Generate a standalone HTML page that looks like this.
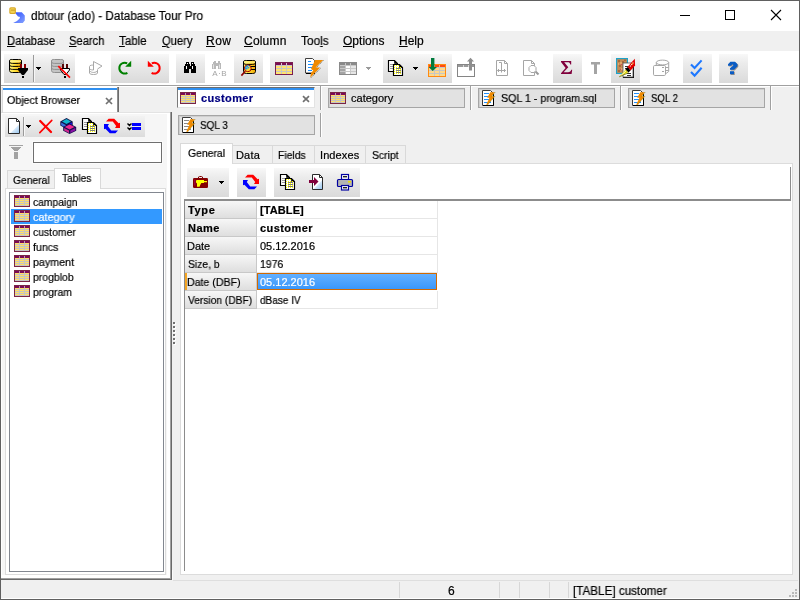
<!DOCTYPE html>
<html>
<head>
<meta charset="utf-8">
<title>dbtour (ado) - Database Tour Pro</title>
<style>
*{box-sizing:border-box;margin:0;padding:0}
html,body{width:800px;height:600px;overflow:hidden;background:#f0f0f0}
body{font-family:"Liberation Sans",sans-serif;font-size:11px;color:#000;position:relative}
.abs,.t,.tb,.ic{position:absolute}
.t{white-space:nowrap;line-height:1;will-change:transform;-webkit-text-stroke:0.2px currentColor}
/* window frame */
#frame{position:absolute;left:0;top:0;width:800px;height:600px;border:1px solid #606060;pointer-events:none;z-index:50}
#titlebar{position:absolute;left:1px;top:1px;width:798px;height:30px;background:#fff}
#menubar{position:absolute;left:1px;top:31px;width:798px;height:20px;background:#f0f0f0}
#menubar .t{font-size:12px;top:4px}
#menubar u{text-decoration:underline;text-decoration-thickness:1px;text-underline-offset:1px}
#toolbar{position:absolute;left:1px;top:51px;width:798px;height:34px;background:#fff}
.tb{top:54px;height:29px;width:29px;background:linear-gradient(#f8f8f8,#ececec 30%,#dadada)}
.ic{overflow:visible}
/* main tabs */
.mtab{position:absolute;height:20px;background:#e2e2e2;border:1px solid #a5a5a5;box-shadow:inset 1px 1px 0 #cfcfcf}
.mtab .t{font-size:11px;top:4px}
.vsep{position:absolute;width:2px;border-left:1px solid #a0a0a0;border-right:1px solid #fff}
/* grid */
.gh{position:absolute;left:185px;width:72px;height:18px;background:linear-gradient(#f7f7f7,#dedede);border-right:1px solid #c8c8c8;border-bottom:1px solid #c8c8c8}
.gv{position:absolute;left:257px;width:181px;height:18px;background:#fff;border-right:1px solid #e6e6e6;border-bottom:1px solid #e6e6e6}
.gh .t,.gv .t{top:4px;left:3px;font-size:11px}
.b{font-weight:bold}
/* list */
.li{position:absolute;left:11px;width:151px;height:15px}
.li .t{left:22px;top:3px;font-size:11px}
</style>
</head>
<body>
<div id="titlebar">
  <div class="t" id="ttl" style="left:29.9px;top:9px;font-size:12px;transform:scaleX(0.978);transform-origin:0 0">dbtour (ado) - Database Tour Pro</div>
</div>
<div id="menubar">
  <div class="t" style="left:6.2px;transform:scaleX(0.936);transform-origin:0 0"><u>D</u>atabase</div>
  <div class="t" style="left:68px;transform:scaleX(0.932);transform-origin:0 0"><u>S</u>earch</div>
  <div class="t" style="left:117.8px;transform:scaleX(0.964);transform-origin:0 0"><u>T</u>able</div>
  <div class="t" style="left:160.7px;transform:scaleX(0.933);transform-origin:0 0"><u>Q</u>uery</div>
  <div class="t" style="left:204.6px;letter-spacing:0.5px"><u>R</u>ow</div>
  <div class="t" style="left:243.4px;letter-spacing:0.2px"><u>C</u>olumn</div>
  <div class="t" style="left:300.4px;transform:scaleX(0.986);transform-origin:0 0">Too<u>l</u>s</div>
  <div class="t" style="left:342.4px;letter-spacing:0.02px"><u>O</u>ptions</div>
  <div class="t" style="left:397.5px;letter-spacing:0px"><u>H</u>elp</div>
</div>
<div id="toolbar"></div>
<div class="abs" style="left:1px;top:85px;width:798px;height:1px;background:#a0a0a0"></div>
<div class="abs" style="left:1px;top:86px;width:798px;height:1px;background:#fff"></div>

<!-- TOOLBAR-BUTTONS -->
<div class="tb" style="left:4px;width:71px"></div>
<div class="tb" style="left:111px;width:58px"></div>
<div class="tb" style="left:176px;width:29px"></div>
<div class="tb" style="left:234px;width:29px"></div>
<div class="tb" style="left:270px;width:58px"></div>
<div class="tb" style="left:383px;width:69px"></div>
<div class="tb" style="left:553px;width:29px"></div>
<div class="tb" style="left:611px;width:29px"></div>
<div class="tb" style="left:683px;width:29px"></div>
<div class="tb" style="left:719px;width:29px"></div>
<div class="abs" style="left:33px;top:55px;width:1px;height:27px;background:#9a9a9a"></div>
<div class="abs" style="left:34px;top:55px;width:1px;height:27px;background:#f6f6f6"></div>
<!-- TOOLBAR-ICONS -->

<!-- OBJECT-BROWSER -->
<!-- OB tab -->
<div class="abs" style="left:2px;top:87px;width:117px;height:26px;background:#fff;border-left:1px solid #d9d9d9;border-right:1px solid #6c6c6c;box-shadow:inset -1px 0 0 #8e8e8e"></div>
<div class="abs" style="left:3px;top:88px;width:114px;height:2px;background:#2f8ff0"></div>
<div class="t" id="obt" style="left:6.8px;top:95px;font-size:11px;transform:scaleX(0.971);transform-origin:0 0">Object Browser</div>
<svg class="ic" style="left:104.5px;top:96.5px" width="8" height="8" viewBox="0 0 8 8"><path d="M1 1L7 7M7 1L1 7" stroke="#707070" stroke-width="1.7" fill="none"/></svg>
<!-- OB panel -->
<div class="abs" style="left:1px;top:112px;width:171px;height:468px;background:#a0a0a0"></div><div class="abs" style="left:1px;top:112px;width:171px;height:468px;border-right:1px solid #696969;border-bottom:1px solid #696969"></div><div class="abs" style="left:1px;top:112px;width:169px;height:466px;background:#f6f6f6;border-top:1px solid #e3e3e3"></div><div class="abs" style="left:172px;top:570px;width:1px;height:10px;background:#fbfbfb"></div>
<div class="abs" style="left:1px;top:113px;width:169px;height:465px;border-left:1px solid #fff;border-top:1px solid #fff;border-right:3px solid #fff;border-bottom:3px solid #fff"></div>
<div class="abs" style="left:2px;top:87px;width:1px;height:26px;background:#d9d9d9"></div>
<!-- OB toolbar -->
<div class="abs" style="left:5px;top:116px;width:140px;height:21px;background:linear-gradient(#f3f3f3,#dcdcdc)"></div>
<div class="abs" style="left:23px;top:117px;width:1px;height:19px;background:#9a9a9a"></div>
<div class="abs" style="left:24px;top:117px;width:1px;height:19px;background:#f8f8f8"></div>
<!-- OB-ICONS -->
<!-- filter input -->
<div class="abs" style="left:33px;top:142px;width:129px;height:21px;background:#fff;border:1px solid #6f6f6f;box-shadow:0 0 0 1px #fbfbfb"></div>
<!-- OB inner tabs -->
<div class="abs" style="left:7px;top:170px;width:48px;height:18px;background:#f0f0f0;border:1px solid #d9d9d9;border-bottom:none"></div>
<div class="t" style="left:12.8px;top:175px;font-size:11px;transform:scaleX(0.936);transform-origin:0 0">General</div>
<div class="abs" style="left:5px;top:188px;width:161px;height:387px;background:#fff;border:1px solid #dcdcdc"></div>
<div class="abs" style="left:54px;top:168px;width:47px;height:21px;background:#fff;border:1px solid #d9d9d9;border-bottom:none"></div>
<div class="t" style="left:62.2px;top:173px;font-size:11px;transform:scaleX(0.922);transform-origin:0 0">Tables</div>
<!-- list -->
<div class="abs" style="left:9px;top:192px;width:155px;height:380px;background:#fff;border:1px solid #828790"></div>
<div class="li" style="top:209px;background:#3399ff"></div>
<!-- OB-LIST -->
<div class="li" style="top:194px"><div class="t" style="transform:scaleX(0.936);transform-origin:0 0">campaign</div></div>
<div class="li" style="top:209px"><div class="t" style="transform:scaleX(0.986);transform-origin:0 0;color:#fff">category</div></div>
<div class="li" style="top:224px"><div class="t" style="transform:scaleX(0.947);transform-origin:0 0">customer</div></div>
<div class="li" style="top:239px"><div class="t" style="transform:scaleX(0.969);transform-origin:0 0">funcs</div></div>
<div class="li" style="top:254px"><div class="t" style="transform:scaleX(0.971);transform-origin:0 0">payment</div></div>
<div class="li" style="top:269px"><div class="t" style="transform:scaleX(0.949);transform-origin:0 0">progblob</div></div>
<div class="li" style="top:284px"><div class="t" style="transform:scaleX(0.951);transform-origin:0 0">program</div></div>



<!-- MAIN-PANEL -->
<!-- active tab: customer -->
<div class="abs" style="left:177px;top:87px;width:138px;height:21px;background:#fff;border-left:1px solid #7a7a7a;border-top:1px solid #6c6c6c;border-right:1px solid #e3e3e3;border-bottom:1px solid #e3e3e3"></div>
<div class="abs" style="left:178px;top:88px;width:136px;height:2px;background:#2f8ff0"></div>
<div class="t b" id="cust" style="left:201px;top:93px;font-size:11px;color:#000080;letter-spacing:0.37px">customer</div>
<svg class="ic" style="left:301.6px;top:94.6px" width="8" height="8" viewBox="0 0 8 8"><path d="M1 1.2L7 6.8M7 1.2L1 6.8" stroke="#707070" stroke-width="1.7" fill="none"/></svg>
<!-- other tabs -->
<div class="mtab" style="left:328px;top:88px;width:137px"><div class="t" style="left:21.7px;letter-spacing:0.01px">category</div></div>
<div class="mtab" style="left:478px;top:88px;width:137px"><div class="t" style="left:21.5px;transform:scaleX(0.970);transform-origin:0 0">SQL 1 - program.sql</div></div>
<div class="mtab" style="left:628px;top:88px;width:137px"><div class="t" style="left:21.9px;transform:scaleX(0.874);transform-origin:0 0">SQL 2</div></div>
<div class="mtab" style="left:178px;top:115px;width:137px"><div class="t" style="left:21.4px;transform:scaleX(0.903);transform-origin:0 0">SQL 3</div></div>
<div class="vsep" style="left:320px;top:86px;height:24px"></div>
<div class="vsep" style="left:470px;top:86px;height:24px"></div>
<div class="vsep" style="left:620px;top:86px;height:24px"></div>
<div class="vsep" style="left:770px;top:86px;height:24px"></div>
<div class="vsep" style="left:320px;top:113px;height:24px"></div>
<!-- MAIN-TAB-ICONS -->
<!-- page control -->
<div class="abs" style="left:180px;top:163px;width:613px;height:412px;background:#fff;border:1px solid #dcdcdc"></div>
<div class="abs" style="left:232px;top:145px;width:41px;height:18px;border:1px solid #d9d9d9;border-bottom:none;border-left:none"></div>
<div class="abs" style="left:272px;top:145px;width:43px;height:18px;border:1px solid #d9d9d9;border-bottom:none;border-left:none"></div>
<div class="abs" style="left:314px;top:145px;width:52px;height:18px;border:1px solid #d9d9d9;border-bottom:none;border-left:none"></div>
<div class="abs" style="left:365px;top:145px;width:41px;height:18px;border:1px solid #d9d9d9;border-bottom:none;border-left:none"></div>
<div class="abs" style="left:180px;top:143px;width:53px;height:21px;background:#fff;border:1px solid #d9d9d9;border-bottom:none"></div>
<div class="t" style="left:187.6px;top:148px;transform:scaleX(0.946);transform-origin:0 0">General</div>
<div class="t" style="left:235.5px;top:150px;letter-spacing:0.17px">Data</div>
<div class="t" style="left:277.5px;top:150px;transform:scaleX(0.946);transform-origin:0 0">Fields</div>
<div class="t" style="left:320px;top:150px;letter-spacing:0.1px">Indexes</div>
<div class="t" style="left:371.5px;top:150px;transform:scaleX(0.946);transform-origin:0 0">Script</div>
<!-- page toolbar -->
<div class="tb" style="left:187px;top:168px;width:42px;height:29px"></div>
<div class="tb" style="left:237px;top:168px;width:29px;height:29px"></div>
<div class="tb" style="left:274px;top:168px;width:86px;height:29px"></div>
<div class="abs" style="left:790px;top:167px;width:1px;height:33px;background:#8c8c8c"></div>
<div class="abs" style="left:184px;top:199px;width:607px;height:2px;background:#8c8c8c"></div>
<div class="abs" style="left:184px;top:199px;width:1px;height:372px;background:#8c8c8c"></div>
<!-- PAGE-ICONS -->
<!-- grid -->
<div class="gh" style="top:201px"><div class="t b" style="letter-spacing:0.67px">Type</div></div><div class="gv" style="top:201px"><div class="t b" style="letter-spacing:0.1px">[TABLE]</div></div>
<div class="gh" style="top:219px"><div class="t b" style="letter-spacing:0.47px">Name</div></div><div class="gv" style="top:219px"><div class="t b" style="letter-spacing:0.43px">customer</div></div>
<div class="gh" style="top:237px"><div class="t" style="left:2px">Date</div></div><div class="gv" style="top:237px"><div class="t">05.12.2016</div></div>
<div class="gh" style="top:255px"><div class="t" style="transform:scaleX(0.939);transform-origin:0 0">Size, b</div></div><div class="gv" style="top:255px"><div class="t" style="left:2.6px;transform:scaleX(0.957);transform-origin:0 0">1976</div></div>
<div class="gh" style="top:273px"><div class="t" style="left:2px;transform:scaleX(0.963);transform-origin:0 0">Date (DBF)</div></div><div class="gv" style="top:273px;background:linear-gradient(#63b0ff,#3a97fb);border:1px solid #d26900;height:17px;width:180px"><div class="t" style="color:#fff;left:2px;top:3px">05.12.2016</div></div>
<div class="gh" style="top:291px"><div class="t" style="transform:scaleX(0.928);transform-origin:0 0">Version (DBF)</div></div><div class="gv" style="top:291px"><div class="t" style="transform:scaleX(0.911);transform-origin:0 0">dBase IV</div></div>
<div class="abs" style="left:185px;top:273px;width:2px;height:17px;background:#f5a623"></div>
<!-- splitter grip -->
<div class="abs" style="left:174px;top:323px;width:2px;height:2px;background:#fff;box-shadow:0 4px 0 #fff,0 8px 0 #fff,0 12px 0 #fff,0 16px 0 #fff,0 20px 0 #fff"></div>
<div class="abs" style="left:173px;top:322px;width:2px;height:2px;background:#707070;box-shadow:0 4px 0 #707070,0 8px 0 #707070,0 12px 0 #707070,0 16px 0 #707070,0 20px 0 #707070"></div>


<!-- STATUS-BAR -->
<div class="abs" style="left:173px;top:580px;width:625px;height:1px;background:#dedede"></div>
<div class="abs" style="left:1px;top:581px;width:798px;height:17px;background:#f0f0f0"></div>
<div class="abs" style="left:1px;top:598px;width:798px;height:1px;background:#fff"></div>
<div class="abs" style="left:399px;top:582px;width:1px;height:16px;background:#d7d7d7"></div>
<div class="abs" style="left:499px;top:582px;width:1px;height:16px;background:#d7d7d7"></div>
<div class="abs" style="left:519px;top:582px;width:1px;height:16px;background:#d7d7d7"></div>
<div class="abs" style="left:549px;top:582px;width:1px;height:16px;background:#d7d7d7"></div>
<div class="abs" style="left:568px;top:582px;width:1px;height:16px;background:#d7d7d7"></div>
<div class="abs" style="left:795px;top:589px;width:2px;height:2px;background:#b9b9b9;box-shadow:0 3px 0 #b9b9b9,0 6px 0 #b9b9b9,-3px 3px 0 #b9b9b9,-3px 6px 0 #b9b9b9,-6px 6px 0 #b9b9b9"></div>
<div class="t" style="left:447.5px;top:585px;font-size:12px">6</div>
<div class="t" id="stt" style="left:572.5px;top:585px;font-size:12px;transform:scaleX(0.972);transform-origin:0 0">[TABLE] customer</div>


<!-- ICONS-BEGIN -->
<svg class="abs" style="left:0;top:0;z-index:10" width="800" height="600" viewBox="0 0 800 600">
<defs>
<linearGradient id="gy" x1="0" x2="1" y1="0" y2="0"><stop offset="0" stop-color="#fff27a"/><stop offset=".45" stop-color="#ffe23a"/><stop offset="1" stop-color="#f0a000"/></linearGradient>
<linearGradient id="gb2" x1="0" x2="1" y1="0" y2="1"><stop offset=".4" stop-color="#e4f1fc"/><stop offset="1" stop-color="#9cc8f0"/></linearGradient><linearGradient id="gb" x1="0" x2="1" y1="0" y2="1"><stop offset=".45" stop-color="#fff"/><stop offset=".5" stop-color="#cfe6fb"/><stop offset="1" stop-color="#9fcaf2"/></linearGradient>
<!-- table 16x12 -->
<g id="tbl" shape-rendering="crispEdges">
<rect x="0" y="0" width="16" height="12" fill="#7a2545"/>
<rect x="1" y="1" width="14" height="2" fill="#7a0a57"/>
<rect x="1" y="3" width="14" height="8" fill="#c4c4c4"/>
<g fill="#ffde66"><rect x="1" y="3" width="4" height="1"/><rect x="6" y="3" width="4" height="1"/><rect x="11" y="3" width="4" height="1"/>
<rect x="1" y="5" width="4" height="1"/><rect x="6" y="5" width="4" height="1"/><rect x="11" y="5" width="4" height="1"/>
<rect x="1" y="7" width="4" height="1"/><rect x="6" y="7" width="4" height="1"/><rect x="11" y="7" width="4" height="1"/>
<rect x="1" y="9" width="4" height="1"/><rect x="6" y="9" width="4" height="1"/><rect x="11" y="9" width="4" height="1"/></g>
<rect x="5" y="1" width="1" height="2" fill="#b9a0b0"/><rect x="10" y="1" width="1" height="2" fill="#b9a0b0"/>
</g>
<g id="tbl18" shape-rendering="crispEdges">
<rect x="0" y="0" width="18" height="13" fill="#7a1d50"/>
<rect x="1" y="1" width="16" height="2" fill="#7a0c52"/>
<rect x="1" y="3" width="16" height="9" fill="#c6c6c6"/>
<g fill="#ffe36e"><rect x="1" y="4" width="5" height="2"/><rect x="7" y="4" width="4" height="2"/><rect x="12" y="4" width="5" height="2"/>
<rect x="1" y="7" width="5" height="2"/><rect x="7" y="7" width="4" height="2"/><rect x="12" y="7" width="5" height="2"/>
<rect x="1" y="10" width="5" height="2"/><rect x="7" y="10" width="4" height="2"/><rect x="12" y="10" width="5" height="2"/></g>
<rect x="6" y="1" width="1" height="2" fill="#d8c8d2"/><rect x="11" y="1" width="1" height="2" fill="#d8c8d2"/>
</g>
<!-- sql doc 13x16 origin at doc top-left -->
<g id="sql">
<path d="M0.5 0.5H8.5L11.5 3.5V15.5H0.5Z" fill="#fff" stroke="#3c3c3c"/>
<path d="M1 15.5H11.5V4" fill="none" stroke="#000"/>
<path d="M2 3.5H7M2 6.5H8M2 9.5H8M2 12.5H9" stroke="#1e90ff" stroke-width="1"/>
<path d="M8.3 2.2H13L9.8 6.3H12.8L5.7 14.8H4.2L7.5 7.7H5.2Z" fill="#f08a00"/>
<path d="M13 2.4L9.9 6.4H12.8L5.9 14.6" fill="none" stroke="#5a6a00" stroke-width=".6" stroke-dasharray="1 1"/>
</g>
<g id="sqlg">
<path d="M0.5 0.5H8.5L11.5 3.5V15.5H0.5Z" fill="#fff" stroke="#3c3c3c"/>
<path d="M1 15.5H11.5V4" fill="none" stroke="#000"/>
<path d="M2 3.5H7M2 6.5H8M2 9.5H8M2 12.5H9" stroke="#8a8a8a" stroke-width="1"/>
<path d="M8.3 2.2H13L9.8 6.3H12.8L5.7 14.8H4.2L7.5 7.7H5.2Z" fill="#f08a00"/>
<path d="M13 2.4L9.9 6.4H12.8L5.9 14.6" fill="none" stroke="#5a6a00" stroke-width=".6" stroke-dasharray="1 1"/>
</g>
<!-- copy icon, origin at back doc top-left (16x16) -->
<g id="copy">
<path d="M0.5 0.5H6.5L9.5 3.5V11.5H0.5Z" fill="#fff" stroke="#000" stroke-width="1.15"/>
<path d="M6.5 0.5V3.5H9.5Z" fill="#000" stroke="#000" stroke-width=".6"/>
<path d="M2 4.5H5M2 6.5H5M2 8.5H5" stroke="#9c9c9c"/>
<path d="M5.5 4.5H11.5L14.5 7.5V15.5H5.5Z" fill="#fff" stroke="#000" stroke-width="1.15"/>
<path d="M11.5 4.5V7.5H14.5Z" fill="#000" stroke="#000" stroke-width=".6"/>
<g fill="#ffff00" shape-rendering="crispEdges"><rect x="6" y="5" width="1" height="1"/><rect x="8" y="5" width="1" height="1"/><rect x="10" y="5" width="1" height="1"/><rect x="6" y="7" width="1" height="1"/><rect x="8" y="7" width="1" height="1"/><rect x="10" y="7" width="1" height="1"/><rect x="12" y="7" width="1" height="1"/><rect x="6" y="9" width="1" height="1"/><rect x="8" y="9" width="1" height="1"/><rect x="10" y="9" width="1" height="1"/><rect x="12" y="9" width="1" height="1"/><rect x="6" y="11" width="1" height="1"/><rect x="8" y="11" width="1" height="1"/><rect x="10" y="11" width="1" height="1"/><rect x="12" y="11" width="1" height="1"/><rect x="6" y="13" width="1" height="1"/><rect x="8" y="13" width="1" height="1"/><rect x="10" y="13" width="1" height="1"/><rect x="12" y="13" width="1" height="1"/></g>
<path d="M7.5 8.5H13M7.5 10.5H13M7.5 12.5H13" stroke="#7e7e7e" shape-rendering="crispEdges"/>
</g>
<!-- refresh 16x14 -->
<g id="refr">
<path d="M2 2.4L4.6 -0.2H10.2L14.6 4.2L16 3.8V9H11L12.2 7L8.8 2.4Z" fill="#ff0000"/>
<path d="M14 11.6L11.4 14.2H5.8L1.4 9.8L0 10.2V5H5L3.8 7L7.2 11.6Z" fill="#0000ff"/>
</g>
<g id="dd" shape-rendering="crispEdges"><rect x="0" y="0" width="5" height="1"/><rect x="1" y="1" width="3" height="1"/><rect x="2" y="2" width="1" height="1"/></g>
</defs>
<!-- ===== main toolbar icons ===== -->
<!-- db connect -->
<g>
<path d="M9.5 61C9.5 59 12 59.5 12.5 59.5H18.5C19 59.5 21.5 59 21.5 61V70.5C21.5 72.5 19 72.5 18.5 72.5H12.5C12 72.5 9.5 72.5 9.5 70.5Z" fill="url(#gy)" stroke="#000"/>
<path d="M10 60.3H21V62.3H10Z" fill="#fff48a" opacity=".85"/>
<path d="M9.5 61.5C9.5 63.4 12 63.4 12.5 63.4H18.5C19 63.4 21.5 63.4 21.5 61.5M9.5 64.5C9.5 66.4 12 66.4 12.5 66.4H18.5C19 66.4 21.5 66.4 21.5 64.5M9.5 67.5C9.5 69.4 12 69.4 12.5 69.4H18.5C19 69.4 21.5 69.4 21.5 67.5" fill="none" stroke="#000"/>
<rect x="20" y="64" width="2" height="4" fill="#8a0000"/><rect x="24" y="64" width="2" height="4" fill="#8a0000"/>
<path d="M18 68H28V70L24 75H22L18 70Z" fill="#000"/><rect x="22" y="76" width="2" height="2" fill="#000"/>
</g>
<use href="#dd" x="36" y="67"/>
<!-- db disconnect -->
<g>
<path d="M51.5 61C51.5 59 54 59.5 54.5 59.5H60.5C61 59.5 63.5 59 63.5 61V70.5C63.5 72.5 61 72.5 60.5 72.5H54.5C54 72.5 51.5 72.5 51.5 70.5Z" fill="#c4c4c4" stroke="#8e8e8e"/>
<path d="M51.5 61.5C51.5 63.4 54 63.4 54.5 63.4H60.5C61 63.4 63.5 63.4 63.5 61.5M51.5 64.5C51.5 66.4 54 66.4 54.5 66.4H60.5C61 66.4 63.5 66.4 63.5 64.5M51.5 67.5C51.5 69.4 54 69.4 54.5 69.4H60.5C61 69.4 63.5 69.4 63.5 67.5" fill="none" stroke="#8e8e8e"/>
<rect x="62" y="64" width="2" height="4" fill="#5a0808"/><rect x="66" y="64" width="2" height="4" fill="#5a0808"/>
<path d="M60.5 68.5H69.5V70L66 74.5H64L60.5 70Z" fill="#fff" stroke="#000"/><rect x="64" y="76" width="2" height="2" fill="#000"/>
<path d="M58.3 66.2L70 77.6" stroke="#ff0000" stroke-width="1.7"/>
</g>
<!-- disabled run -->
<g fill="none" stroke="#a8a8a8">
<path d="M93.5 70V61.5L102 66L97.5 69"/>
<path d="M89.5 66.5C89.5 65 93 65 93.5 65.2M89.5 66.5V73C89.5 75 97.5 75 97.5 73V69.5M89.5 68.5C90 70 93 70 93.5 70M90 71C91 73 96.5 73 97.5 70.5"/>
</g>
<!-- redo green -->
<g>
<path d="M127.2 63.3A5.4 5.4 0 1 0 127.4 72.8" fill="none" stroke="#008000" stroke-width="2"/>
<path d="M125.2 66.7H131.2V60.7Z" fill="#008000"/>
</g>
<!-- undo red -->
<g>
<path d="M151.8 63.3A5.4 5.4 0 1 1 151.6 72.8" fill="none" stroke="#ff0000" stroke-width="2"/>
<path d="M153.8 66.7H147.8V60.7Z" fill="#ff0000"/>
</g>
<!-- binoculars -->
<g fill="#000">
<path d="M186 62H189V64H190V66H191V64H191V62H194V64H195V66H196V73H191V69H189V73H184V66H185V64H186Z"/>
<rect x="187" y="63" width="1" height="1" fill="#fff"/><rect x="192" y="63" width="1" height="1" fill="#fff"/>
<rect x="186" y="66" width="1" height="3" fill="#fff"/><rect x="192" y="66" width="1" height="3" fill="#fff"/>
</g>
<!-- binoculars disabled A-B -->
<g fill="#b8b8b8">
<path d="M214 61H216V63H218V61H220V63H221V69H218V66H216V69H212V64H213V62H214Z"/><path d="M213.5 64.5V68.5M219.5 64.5V68.5" stroke="#e4e4e4" stroke-width="1"/>
</g>
<text x="212.3" y="75.6" font-family="Liberation Sans" font-size="8" fill="#a4a4a4" letter-spacing=".5">A·B</text>
<!-- db search -->
<g>
<path d="M243.5 62C243.5 60 246 60.5 246.5 60.5H252.5C253 60.5 255.5 60 255.5 62V71.5C255.5 73.5 253 73.5 252.5 73.5H246.5C246 73.5 243.5 73.5 243.5 71.5Z" fill="url(#gy)" stroke="#000"/>
<path d="M244 61.3H255V63.3H244Z" fill="#fff48a" opacity=".85"/>
<path d="M243.5 62.5C243.5 64.4 246 64.4 246.5 64.4H252.5C253 64.4 255.5 64.4 255.5 62.5" fill="none" stroke="#000"/>
<path d="M251 66.5H255M251 69.5H255" stroke="#000"/>
<circle cx="247.8" cy="68.3" r="3.4" fill="#ffd83a" stroke="#a00000"/>
<path d="M245 69A3 3 0 0 1 249.6 65.8L249 68.6L246.5 69.5Z" fill="#1e9af0"/><path d="M246.5 67.5H247.5M248 66.5H249M247.5 68.5H248.5" stroke="#ffe040" stroke-width=".9"/>
<path d="M245.3 71.2L241.4 75.6" stroke="#900000" stroke-width="1.6"/>
</g>
<!-- table -->
<use href="#tbl18" x="275" y="62"/>
<!-- sql big -->
<g>
<path d="M305.5 58.5H312.5L314.5 60.5V73H305.5Z" fill="#fff" stroke="#404040"/>
<path d="M306 73.5H315" stroke="#000"/>
<path d="M308 61.5H311M308 64.5H313M308 67.5H312M308 70.5H312" stroke="#1e90ff"/>
<path d="M315 60H323.2L315.6 67.6H320.2L310.2 77.8L311 73L313.3 70.4L311 69Z" fill="#f08a00"/><path d="M323.4 60.4L316.2 67.8M320.5 68.3L310.8 78" fill="none" stroke="#3a3a2a" stroke-width=".7" stroke-dasharray="1 1"/>
</g>
<!-- disabled table + dd -->
<g shape-rendering="crispEdges">
<rect x="339" y="62" width="18" height="13" fill="#8a8a8a"/>
<rect x="340" y="65" width="16" height="9" fill="#c8c8c8"/>
<g fill="#a4a4a4"><rect x="340" y="66" width="5" height="2"/><rect x="340" y="69" width="5" height="2"/><rect x="340" y="72" width="5" height="2"/></g>
<g fill="#fff"><rect x="346" y="66" width="4" height="2"/><rect x="346" y="69" width="4" height="2"/><rect x="346" y="72" width="4" height="2"/></g>
<g fill="#e6e6e6"><rect x="351" y="66" width="5" height="2"/><rect x="351" y="69" width="5" height="2"/><rect x="351" y="72" width="5" height="2"/></g>
<rect x="345" y="63" width="1" height="2" fill="#c8c8c8"/><rect x="350" y="63" width="1" height="2" fill="#c8c8c8"/>
</g>
<use href="#dd" x="366" y="67" fill="#9a9a9a"/>
<!-- copy -->
<use href="#copy" x="388" y="60"/>
<use href="#dd" x="413" y="67"/>
<!-- import table -->
<g shape-rendering="crispEdges">
<rect x="428" y="64" width="18" height="13" fill="#ff8a10"/>
<rect x="429" y="65" width="16" height="2" fill="#ff4a10"/>
<rect x="429" y="67" width="16" height="9" fill="#c6c6c6"/>
<g fill="#ffd98a"><rect x="429" y="68" width="5" height="2"/><rect x="435" y="68" width="4" height="2"/><rect x="440" y="68" width="5" height="2"/>
<rect x="429" y="71" width="5" height="2"/><rect x="435" y="71" width="4" height="2"/><rect x="440" y="71" width="5" height="2"/>
<rect x="429" y="74" width="5" height="2"/><rect x="435" y="74" width="4" height="2"/><rect x="440" y="74" width="5" height="2"/></g>
<rect x="434" y="65" width="1" height="2" fill="#ffb080"/><rect x="439" y="65" width="1" height="2" fill="#ffb080"/>
</g>
<path d="M431 58H434.4V67H437L432.7 71L428.6 67H431Z" fill="#007a3c"/>
<!-- export disabled -->
<g>
<rect x="457.5" y="64.5" width="17" height="12" fill="#fff" stroke="#858585"/>
<rect x="458" y="65" width="16" height="2" fill="#9a9a9a"/>
<rect x="463" y="65" width="1" height="2" fill="#d8d8d8"/><rect x="468" y="65" width="1" height="2" fill="#d8d8d8"/>
<path d="M469 70.5V61.5H467L470.5 57.8L474 61.5H472V70.5Z" fill="#8e8e8e"/>
</g>
<!-- disabled doc 1 -->
<g fill="none" stroke="#a6a6a6">
<path d="M496.5 60.5H504.5L507.5 63.5V75.5H496.5Z"/><path d="M504.5 60.5V63.5H507.5"/>
<path d="M499 62.5H501.5V72.5M497.5 70.5H505.5M499 69L497.5 70.5L499 72M504 69L505.5 70.5L504 72"/>
</g>
<!-- disabled doc 2 -->
<g fill="none" stroke="#a6a6a6">
<path d="M523.5 60.5H531.5L534.5 63.5V75.5H523.5Z"/><path d="M531.5 60.5V63.5H534.5"/>
<path d="M531 65.5H534L536 67.5V70.5L534 72.5H531L529 70.5V67.5Z" fill="#fff"/>
<path d="M535.5 71.5L538.5 74.5" stroke-width="2" stroke="#9a9a9a"/>
</g>
<!-- sigma -->
<path d="M561 61H571.2V64.6H570.3C570 62.8 569.3 62.3 567.6 62.3H564.2L568.3 67.3L563.6 72.2H568C570 72.2 570.8 71.5 571.3 69.8H572.2L571.6 74H561V73.2L565.6 68L561 62Z" fill="#80003c"/>
<!-- T disabled -->
<path d="M591 62H600V64.6H597V74H594V64.6H591Z" fill="#a4a4a4"/>
<!-- paint -->
<g>
<rect x="616.6" y="58.6" width="10.8" height="14.8" fill="#c88a52" stroke="#1ea2c8" stroke-width="1.2"/>
<path d="M618 60H620V62H618ZM622 61H624V63H622ZM619 65H621V67H619ZM618 70H620V72H618ZM624 59.5H626V61H624Z" fill="#a86a3a"/><path d="M620 62H622V64H620ZM623 65H625V67H623ZM621 68H623V70H621ZM618 63H619V65H618Z" fill="#e0a86a"/><path d="M621 64H622V65H621ZM620 69H621V70H620ZM624 63H625V64H624Z" fill="#d04860"/>
<rect x="623" y="63" width="11" height="15" fill="#000"/>
<rect x="623" y="63" width="10" height="14" fill="#fff" stroke="#555" stroke-width=".8"/>
<path d="M625 66.5H630M625 68.5H629M625 70.5H628M627 73.5H631M627 75.5H631" stroke="#333"/>
<path d="M634.8 58.8L635.1 65.5L630.6 70.4L627.4 67Z" fill="#e00000"/>
<path d="M633.4 62.6L629.8 66.6" stroke="#fff" stroke-width="1.1" stroke-dasharray="1.2 .8"/><circle cx="632.3" cy="63.8" r=".6" fill="#ffe000"/>
<path d="M627.4 67L630.6 70.4L628.4 72.6L625.4 69.4Z" fill="#000"/>
<path d="M625.6 69.6L628 72.2L619.2 76.7Z" fill="#e0d800"/>
<path d="M626.2 70.6L620.5 76" stroke="#fff" stroke-width=".9"/>
<path d="M628.5 72.8L619.2 76.8" stroke="#707000" stroke-width=".8"/>
</g>
<!-- disabled db -->
<g fill="none" stroke="#a6a6a6">
<ellipse cx="662.5" cy="62.5" rx="6.2" ry="2.4"/>
<path d="M668.7 62.5V71.5L666 73.5M656.3 62.5V65"/>
<rect x="653.5" y="65.5" width="12" height="10" rx="1.2" fill="#fff"/>
<path d="M662 67.5H664M662 71.5H664M666 67.5H668.5M666 70.5H668.5"/>
</g>
<!-- checks -->
<path d="M691 64.4L694.6 68L701.6 60.4M691 72L694.6 75.6L701.6 67.8" fill="none" stroke="#1e78ff" stroke-width="2.1"/>
<!-- help -->
<path id="qm" d="M728 65.8V64.2L730.4 61.8H735L737.5 64.2V66.2L734 69.8H730V68.2L733.2 65.6V64.6H732L731.2 65.8ZM730 71.2H734V74.3H730Z" fill="#a09488" transform="translate(.8 .6)"/>
<path d="M728 65.8V64.2L730.4 61.8H735L737.5 64.2V66.2L734 69.8H730V68.2L733.2 65.6V64.6H732L731.2 65.8ZM730 71.2H734V74.3H730Z" fill="#0a5cc4"/>

<!-- title icon + window controls -->
<defs><linearGradient id="gsw" x1="0" x2="1" y1="0" y2="1"><stop offset="0" stop-color="#2a4cff"/><stop offset="1" stop-color="#86a4ff"/></linearGradient></defs>
<path d="M14.6 12.2H21.8L24.8 15.5V20.4L22.8 23H13.2L17 21L19.6 18.4L20 17L18 16.4Z" fill="url(#gsw)"/>
<rect x="9.3" y="7.2" width="6.6" height="6.8" rx="1.6" fill="#d8a828"/>
<rect x="10.3" y="8.2" width="4.6" height="4.8" rx="1" fill="#f0d050"/>
<rect x="11" y="9.6" width="4" height="1" fill="#c89a20"/>
<path d="M680 15.5H690" stroke="#000" stroke-width="1" shape-rendering="crispEdges"/>
<rect x="725.5" y="10.5" width="9" height="9" fill="none" stroke="#000" shape-rendering="crispEdges"/>
<path d="M771 10L781 20M781 10L771 20" stroke="#000" stroke-width="1.1"/>
<!-- ===== OB toolbar icons ===== -->
<path d="M8.5 118.5H16.5L19.5 121.5V133.5H8.5Z" fill="#fff" stroke="#2a2a2a"/><path d="M19 124.5V133H10.5Z" fill="url(#gb2)"/>
<path d="M16.5 118.5V121.5H19.5" fill="none" stroke="#2a2a2a"/>
<use href="#dd" x="26" y="125"/>
<path d="M40.2 121L51 132" stroke="#ff0000" stroke-width="2.3" stroke-linecap="round"/>
<path d="M51.8 120.4L39.8 132.6" stroke="#ff0000" stroke-width="1.6" stroke-linecap="round"/>
<!-- cubes -->
<g stroke-linejoin="round">
<path d="M66.5 117.9L72.7 121.4V125.6L66.5 129L60.3 125.6V121.4Z" fill="#12104a"/>
<path d="M66.5 118.9L71 121.5L66.5 123.9L62 121.5Z" fill="#10b4cc"/>
<path d="M61.2 122.4L65.8 124.9V127.7L61.2 125.2Z" fill="#3a70e0"/>
<path d="M71.8 122.4L67.2 124.9V127.7L71.8 125.2Z" fill="#1414ff"/>
<path d="M69.6 123.5L76.2 127V130.7L69.6 134.1L63.2 130.7V127Z" fill="#12104a"/>
<path d="M69.6 124.6L74.5 127.1L69.6 129.5L64.8 127.1Z" fill="#ee2890"/>
<path d="M64.1 128L69 130.5V133L64.1 130.4Z" fill="#d02890"/>
<path d="M75.3 128L70.3 130.5V133L75.3 130.4Z" fill="#8a10a4"/>
</g>
<g transform="translate(82,118)"><use href="#copy" transform="scale(1 1)"/></g>
<use href="#refr" x="104" y="119"/>
<!-- checklist -->
<g shape-rendering="crispEdges">
<rect x="132" y="123" width="9" height="3" fill="#0000ff"/><rect x="132" y="127" width="9" height="3" fill="#0000ff"/>
</g>
<path d="M127.5 123.5L129.5 125.5L131.5 123.5M127.5 127.5L129.5 129.5L131.5 127.5" fill="none" stroke="#000" stroke-width="1.4"/>
<!-- filter -->
<g fill="#a2a2a2" shape-rendering="crispEdges">
<rect x="9" y="145" width="14" height="1"/>
<rect x="11" y="147" width="10" height="1"/><rect x="12" y="148" width="8" height="1"/><rect x="13" y="149" width="6" height="1"/><rect x="14" y="150" width="4" height="1"/>
<rect x="14" y="152" width="4" height="7"/>
</g>
<!-- ===== list icons ===== -->
<use href="#tbl" x="14" y="195"/><use href="#tbl" x="14" y="210"/><use href="#tbl" x="14" y="225"/><use href="#tbl" x="14" y="240"/><use href="#tbl" x="14" y="255"/><use href="#tbl" x="14" y="270"/><use href="#tbl" x="14" y="285"/>
<!-- ===== main tab icons ===== -->
<use href="#tbl" x="180" y="92"/>
<use href="#tbl" x="330" y="92"/>
<use href="#sql" x="482" y="90"/>
<use href="#sql" x="632" y="90"/>
<use href="#sqlg" x="182" y="117"/>
<!-- ===== page toolbar icons ===== -->
<g>
<path d="M198.5 178.5V177L199.5 176.5H201.5L202.5 177V178.5" fill="none" stroke="#800000"/>
<rect x="193" y="178" width="15" height="10" rx="1.2" fill="#850000"/>
<rect x="194" y="179.5" width="1.5" height="6" fill="#a0004a" opacity=".8"/>
<path d="M196 180.6L197 180H204V181H207V182.2H204V183H201.3L200.2 185L199.6 186.8H197V183.4L196 182.6Z" fill="#ffff00"/>
</g>
<use href="#dd" x="219" y="181"/>
<use href="#refr" x="243" y="175"/>
<use href="#copy" x="280" y="174"/>
<!-- export doc -->
<g>
<path d="M312.5 174.5H319.5L322.5 177.5V189.5H312.5Z" fill="#fff" stroke="#2a2a2a"/><path d="M322 180.5V189H313.5Z" fill="url(#gb2)"/>
<path d="M319.5 174.5V177.5H322.5" fill="none" stroke="#2a2a2a"/>
<path d="M309 180H314V177L318.5 181.5L314 186V183H309Z" fill="#80003c"/>
</g>
<!-- printer -->
<g stroke="#0000a0" stroke-width="1.2">
<rect x="341.5" y="174.5" width="7" height="5" fill="#fff"/>
<rect x="337.5" y="179.5" width="15" height="7" rx="1" fill="#b4b4b4"/>
<rect x="341.5" y="185.5" width="7" height="4.5" fill="#fff"/>
</g>
<rect x="343" y="176" width="4" height="1.4" fill="#222"/><rect x="343" y="187" width="4" height="1.4" fill="#222"/><rect x="348" y="181" width="3" height="1.5" fill="#f0e000"/>
</svg>

<!-- ICONS-END -->
<div id="frame"></div>
</body>
</html>
